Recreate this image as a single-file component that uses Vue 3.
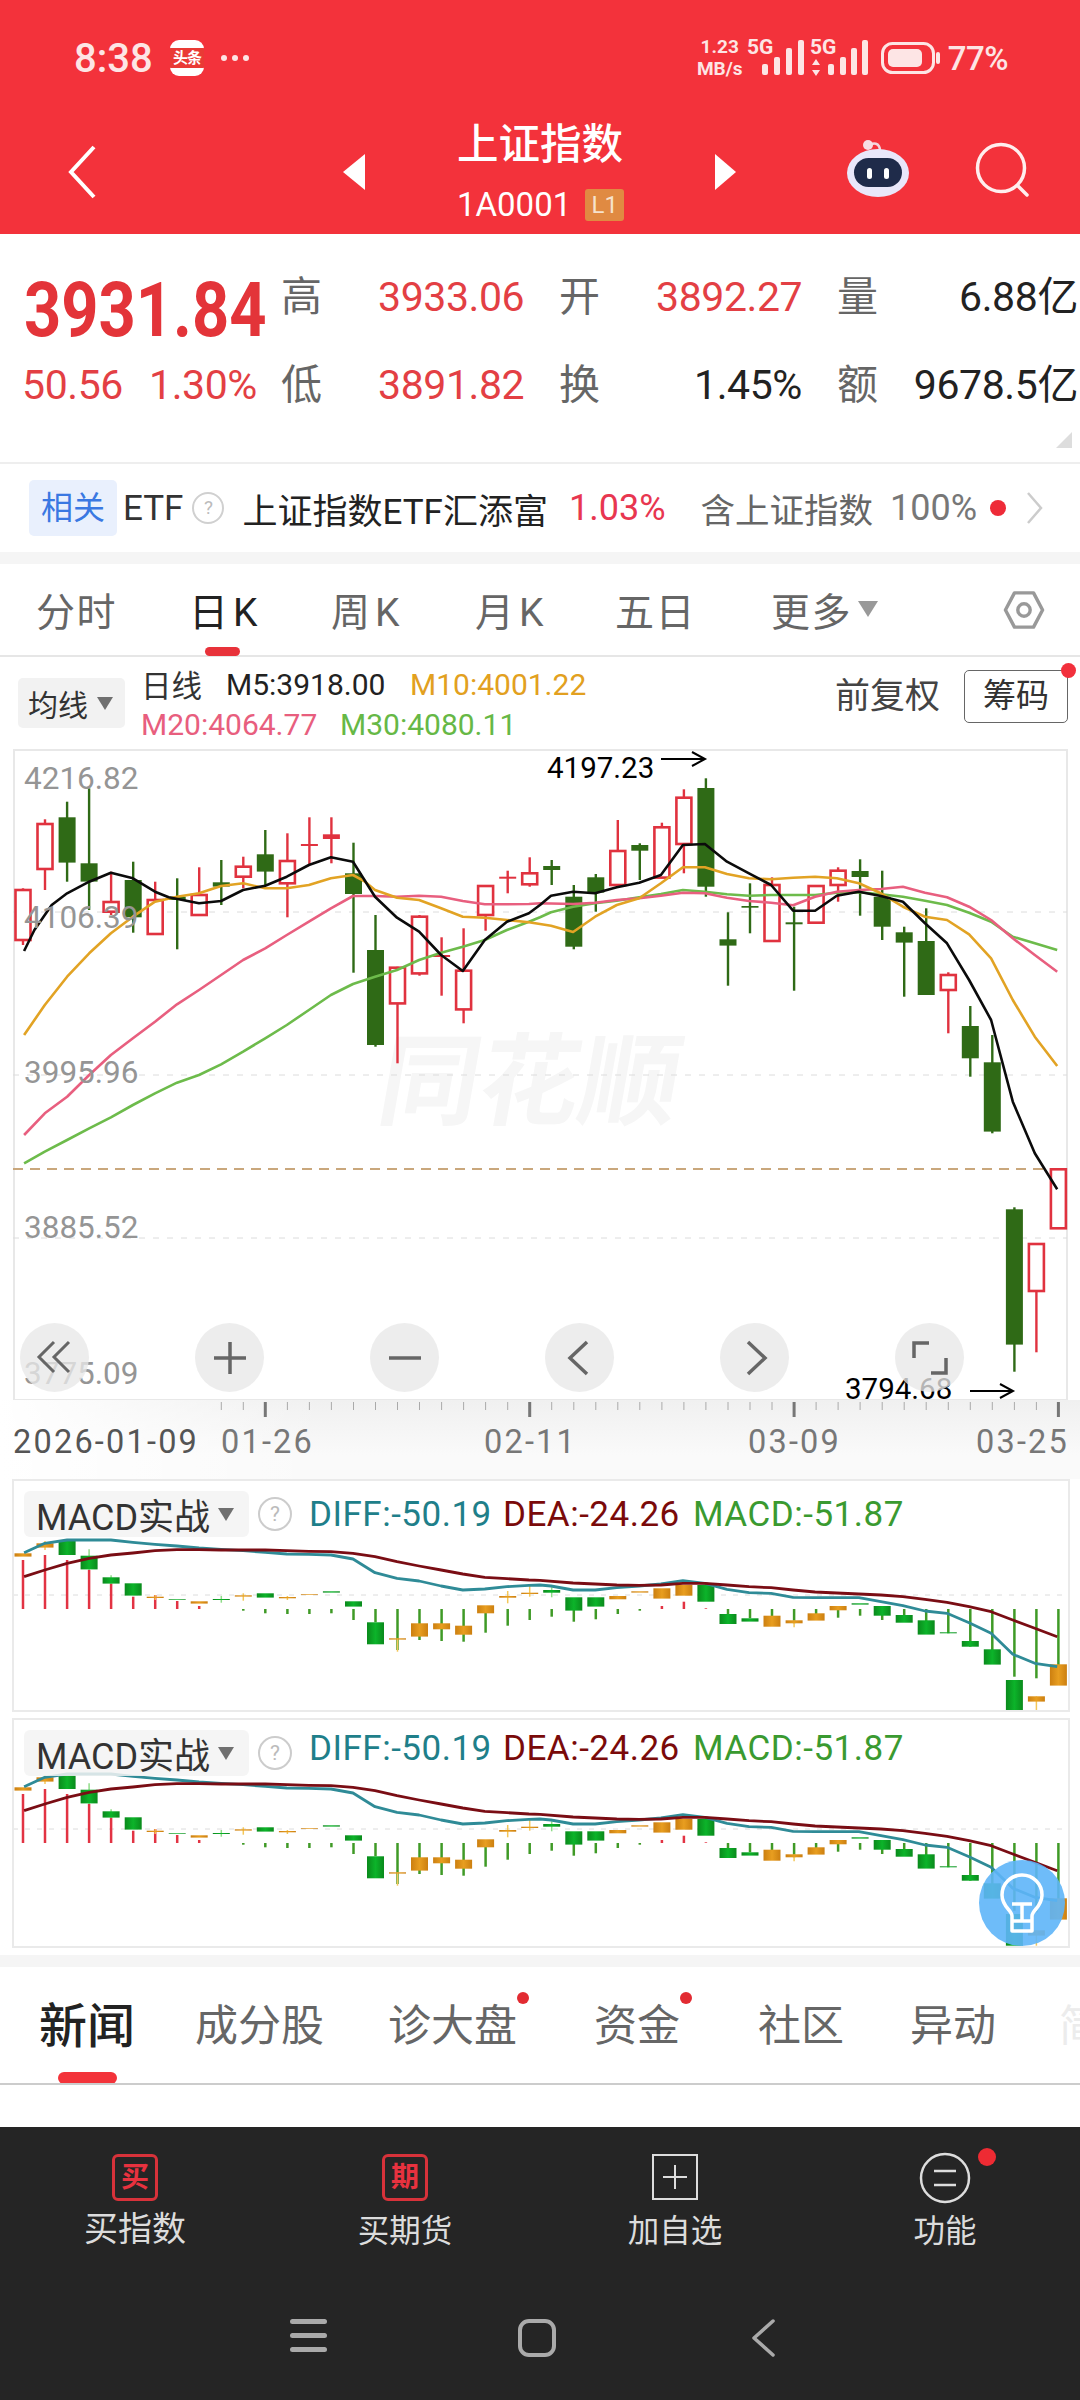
<script setup>
const X = i => 23 + 22.03 * i
const Y = d => +(750 + d / 3).toFixed(1)
const pairs = (a, ox) => {
  const out = []
  for (let i = 0; i < a.length; i += 2) out.push(`${(ox + a[i] / 2.904).toFixed(1)},${Y(a[i + 1])}`)
  return out
}
const line = (a, b) => [...pairs(a, 0), ...pairs(b, 540)].join(' ')

const kRaw = [
  ['R',415,420,570,585],['R',208,222,357,420],['G',155,202,338,395],['G',115,340,395,480],
  ['R',365,456,485,495],['G',335,390,502,548],['R',395,450,552,552],['G',385,440,450,598],
  ['R',352,435,495,495],['G',330,397,410,465],['R',320,350,380,415],['G',240,313,365,405],
  ['R',250,333,400,502],['R',202,282,288,342],['R',202,253,267,340],['G',278,370,432,668],
  ['G',495,600,885,890],['R',650,653,760,940],['R',495,500,670,677],['R',562,615,621,737],
  ['R',535,662,778,820],['R',408,408,495,542],['R',362,380,386,430],['R',322,370,403,410],
  ['G',330,348,360,405],['G',405,440,590,598],['G',372,382,428,485],['R',210,303,405,405],
  ['G',280,285,302,390],['R',218,232,383,385],['R',118,143,282,370],['G',85,114,410,440],
  ['G',487,568,587,707],['G',400,468,473,550],['R',382,405,573,573],['G',470,517,523,722],
  ['R',408,408,518,518],['R',352,362,405,455],['G',328,363,381,497],['G',362,440,530,570],
  ['G',530,547,578,740],['G',475,573,735,735],['R',667,675,720,850],['G',768,828,925,980],
  ['G',855,937,1145,1150],['G',1372,1378,1784,1865],['R',1482,1482,1623,1807],['R',1255,1258,1435,1435]
]
const candles = kRaw.map((k, i) => {
  const x = +X(i).toFixed(1)
  const thin = k[3] - k[2] < 24
  return {
    i, x, red: k[0] === 'R', thin,
    wy1: Y(k[1]), wy2: Y(k[4]),
    by: Y(k[2]), bh: +Math.max((k[3] - k[2]) / 3, 1.5).toFixed(1)
  }
})

const m5 = line(
  [70,603,100,540,150,465,195,430,259,395,322,368,386,385,450,425,490,442,578,460,642,453,706,420,770,407,833,380,897,345,961,322,1025,335,1089,440,1153,503,1217,545,1281,615,1344,663,1408,570,1472,515,1536,490],
  [0,465,32,437,96,425,160,430,223,412,288,398,351,375,415,285,479,282,543,335,607,370,671,405,735,482,799,482,862,437,926,425,990,438,1054,455,1118,520,1182,580,1246,690,1310,810,1373,1055,1437,1210,1502,1318]
)
const m10 = line(
  [70,855,130,765,195,680,259,610,322,550,386,500,450,455,514,440,578,430,642,408,706,400,770,415,833,415,897,405,961,385,1025,375,1060,395,1089,420,1153,443,1217,450,1281,475,1344,500,1408,503,1472,510,1536,517],
  [0,522,32,527,96,546,160,500,223,465,288,445,351,400,415,352,479,352,543,372,607,385,671,388,735,383,799,380,862,385,926,400,990,430,1054,470,1118,500,1182,510,1246,553,1310,625,1373,750,1437,860,1502,948]
)
const m20 = line(
  [70,1155,130,1090,195,1040,259,975,322,915,386,865,450,815,514,763,578,720,642,675,706,630,770,595,833,555,897,515,961,475,1025,438,1089,438,1153,440,1217,437,1281,440,1344,453,1408,463,1472,463,1536,462],
  [0,460,96,462,160,458,223,450,288,445,351,437,415,428,479,430,543,443,607,453,671,458,735,466,799,440,862,425,926,420,990,417,1054,410,1118,428,1182,442,1246,470,1310,510,1373,565,1437,615,1502,665]
)
const m30 = line(
  [70,1240,130,1205,195,1170,259,1135,322,1102,386,1065,450,1030,514,998,578,975,642,943,706,905,770,865,833,825,897,780,961,735,1025,702,1089,680,1153,660,1217,630,1281,608,1344,590,1408,570,1472,540,1536,515],
  [0,502,32,487,96,470,160,460,223,452,288,442,351,432,415,420,479,425,543,433,607,437,671,435,735,435,799,435,862,428,926,427,990,433,1054,440,1118,452,1182,465,1246,488,1310,515,1373,560,1437,580,1502,600]
)

const ticks = Array.from({ length: 39 }, (_, k) => {
  const i = k + 9
  return { x: +X(i).toFixed(1), major: [11, 23, 35, 47].includes(i) }
})

// MACD pane data, in zoom units
const diffA = [70,278,130,250,195,240,259,240,322,240,386,247,450,253,514,258,578,264,642,268,706,272,770,277,833,282,897,283,961,285,1025,297,1089,338,1153,355,1217,363,1281,378,1344,390,1408,387,1472,380,1536,376]
const diffB = [0,375,32,378,96,390,160,390,223,383,288,378,351,372,415,362,479,370,543,388,607,398,671,400,735,412,799,413,862,413,926,413,990,425,1054,437,1118,453,1182,460,1246,488,1310,520,1373,583,1437,610,1502,620]
const deaA = [70,350,130,330,195,310,259,295,322,285,386,279,450,272,514,269,578,269,642,270,706,270,770,270,833,272,897,274,961,275,1025,280,1089,290,1153,305,1217,318,1281,330,1344,342,1408,352,1472,356,1536,360]
const deaB = [0,361,96,369,160,372,223,375,288,376,351,375,415,370,479,370,543,375,607,380,671,383,735,390,799,396,862,399,926,402,990,405,1054,410,1118,418,1182,427,1246,440,1310,455,1373,480,1437,505,1502,530]

const stickRaw = [300,285,300,330,370,410,405,423,438,0,-452,-460,-462,-462,-460,-480,-487,-570,-540,-543,-545,-518,-497,-480,-470,-485,-478,-462,-452,438,425,445,-470,-475,-490,-490,-470,-473,-467,-480,-468,-483,-520,-560,-575,-650,-655,-625]
const boxRaw = [
  ['O',280,290],['O',250,263,243,270],['G',240,285],['G',287,328,268,330],['G',352,371,346,372],['G',370,407],
  ['O',410,414,405,420],['G',417,419],['O',424,431],['G',417,420,408,428],['O',406,410,400,422],['G',400,413],
  ['O',411,415,408,420],['O',403,405],['G',394,398],['G',424,440],['G',487,553],['O',535,539,535,575],
  ['O',490,530],['O',490,508],['O',497,524],['O',436,460],['O',408,413,393,430],['O',398,402,375,410],
  ['G',390,398,382,412],['G',412,452],['G',412,440],['O',408,418],['O',394,398],['O',385,416],['O',375,407],
  ['G',375,425],['G',462,492],['G',475,485],['O',467,500],['O',481,490,481,502],['O',460,482],['O',438,451],
  ['G',430,434],['G',438,467],['G',465,488],['G',481,524],['G',517,520],['G',543,560],['G',568,614],
  ['G',660,755],['O',709,725,709,755],['O',613,677]
]
const buildPane = (n, top, height, off) => {
  const y = d => +(1460 + (d + off) / 3).toFixed(1)
  const toPts = (a, ox) => {
    const r = []
    for (let i = 0; i < a.length; i += 2) r.push(`${(ox + a[i] / 2.904).toFixed(1)},${y(a[i + 1])}`)
    return r
  }
  return {
    n, top, height,
    view: `0 ${top} 1080 ${height}`,
    zero: y(405),
    diff: [...toPts(diffA, 0), ...toPts(diffB, 540)].join(' '),
    dea: [...toPts(deaA, 0), ...toPts(deaB, 540)].join(' '),
    sticks: stickRaw.map((s, i) => ({
      i, x: +X(i).toFixed(1), red: s > 0,
      y1: s > 0 ? y(s) : y(447), y2: s > 0 ? y(447) : y(-s), skip: s === 0
    })).filter(s => !s.skip),
    boxes: boxRaw.map((b, i) => ({
      i, x: +X(i).toFixed(1), orange: b[0] === 'O',
      y: y(b[1]), h: +((b[2] - b[1]) / 3).toFixed(1),
      w1: b[3] !== undefined ? y(b[3]) : null, w2: b[4] !== undefined ? y(b[4]) : null
    }))
  }
}
const panes = [buildPane('a', 1479, 233, 0), buildPane('b', 1718, 230, 702)]

const timeTabs = [{ t: '分时' }, { t: '日K', k: true, act: true }, { t: '周K', k: true }, { t: '月K', k: true }, { t: '五日' }]
const newsTabs = [
  { t: '新闻', on: true }, { t: '成分股' }, { t: '诊大盘', dot: true }, { t: '资金', dot: true },
  { t: '社区' }, { t: '异动' }, { t: '简', fade: true }
]
</script>

<template>
  <div class="page">
    <header class="hdr">
      <div class="status">
        <span class="time">8:38</span>
        <span class="tt"><span class="tt-band">头条</span></span>
        <svg class="more" width="30" height="8" viewBox="0 0 30 8"><circle cx="4" cy="4" r="3" fill="#fde5e5"/><circle cx="15" cy="4" r="3" fill="#fde5e5"/><circle cx="26" cy="4" r="3" fill="#fde5e5"/></svg>
        <div class="sr">
          <div class="net"><span>1.23</span><span>MB/s</span></div>
          <svg class="sig" width="60" height="50" viewBox="0 -12 60 50">
            <text x="0" y="15" class="fiveg">5G</text>
            <rect x="15" y="25" width="6" height="11" rx="2"/><rect x="27" y="18" width="6" height="18" rx="2"/><rect x="39" y="9" width="6" height="27" rx="2"/><rect x="51" y="1" width="6" height="35" rx="2"/>
          </svg>
          <svg class="sig" width="62" height="50" viewBox="0 -12 62 50">
            <text x="0" y="15" class="fiveg">5G</text>
            <path d="M6 20l4 6H2zM6 37l4-6H2z"/>
            <rect x="18" y="25" width="6" height="11" rx="2"/><rect x="30" y="18" width="6" height="18" rx="2"/><rect x="41" y="9" width="6" height="27" rx="2"/><rect x="52" y="1" width="6" height="35" rx="2"/>
          </svg>
          <svg class="batt" width="60" height="32" viewBox="0 0 60 32">
            <rect x="1.5" y="1.5" width="51" height="29" rx="10" fill="none" stroke="#fde5e5" stroke-width="3"/>
            <rect x="7" y="7" width="34" height="18" rx="5" fill="#fde5e5"/>
            <rect x="55" y="10" width="4" height="12" rx="2" fill="#fde5e5"/>
          </svg>
          <span class="pct">77%</span>
        </div>
      </div>
      <div class="nav">
        <svg class="back" width="32" height="56" viewBox="0 0 32 56"><path d="M28 3 5 28l23 25" fill="none" stroke="#fff" stroke-width="4"/></svg>
        <span class="tri-l"></span>
        <div class="title">
          <div class="title-t">上证指数</div>
          <div class="title-c">1A0001<span class="l1">L1</span></div>
        </div>
        <span class="tri-r"></span>
        <svg class="robot" width="64" height="60" viewBox="0 0 64 60">
          <path d="M22 9c5-6 12-4 12 4" fill="none" stroke="#f3d5dc" stroke-width="2.5"/>
          <circle cx="22" cy="7" r="5" fill="#f7dde3"/>
          <ellipse cx="32" cy="35" rx="31" ry="24" fill="#e9e7fa"/>
          <rect x="8" y="20" width="48" height="29" rx="14.5" fill="#1f2b4a"/>
          <rect x="21" y="30" width="5" height="11" rx="2.5" fill="#fff"/>
          <rect x="38" y="30" width="5" height="11" rx="2.5" fill="#fff"/>
        </svg>
        <svg class="search" width="58" height="58" viewBox="0 0 58 58">
          <circle cx="26" cy="26" r="23.5" fill="none" stroke="#ffeeee" stroke-width="3.5"/>
          <path d="M43 44l9 9" stroke="#ffeeee" stroke-width="3.5" stroke-linecap="round"/>
        </svg>
      </div>
    </header>

    <section class="quote">
      <div class="price"><span>3931.84</span></div>
      <span class="lab">高</span><span class="val red">3933.06</span>
      <span class="lab">开</span><span class="val red rt">3892.27</span>
      <div class="lastcell"><span class="lab">量</span><span class="val dark">6.88亿</span></div>
      <div class="change"><span>50.56</span><span>1.30%</span></div>
      <span class="lab">低</span><span class="val red">3891.82</span>
      <span class="lab">换</span><span class="val dark rt">1.45%</span>
      <div class="lastcell"><span class="lab">额</span><span class="val dark">9678.5亿</span></div>
      <span class="corner"></span>
    </section>

    <section class="etf">
      <span class="chip-rel">相关</span>
      <span class="etf-l">ETF</span>
      <span class="help-s">?</span>
      <span class="etf-name">上证指数ETF汇添富</span>
      <span class="etf-pct">1.03%</span>
      <span class="etf-inc">含上证指数</span>
      <span class="etf-100">100%</span>
      <span class="etf-dot"></span>
      <svg class="etf-chev" width="18" height="32" viewBox="0 0 18 32"><path d="M2 1l13 15L2 31" fill="none" stroke="#ccc" stroke-width="2.5"/></svg>
    </section>
    <div class="band"></div>

    <nav class="tabs">
      <span v-for="t in timeTabs" :key="t.t" class="tab" :class="{ act: t.act, tabk: t.k }">{{ t.t }}</span>
      <span class="tab tab-more">更多<i class="tr tr-g"></i></span>
      <svg class="gear" width="42" height="40" viewBox="0 0 44 42">
        <path d="M12 3h20L41.500 21 32 39H12L2.500 21z" fill="none" stroke="#999" stroke-width="3.600" stroke-linejoin="round"/>
        <circle cx="22" cy="21" r="6.500" fill="none" stroke="#999" stroke-width="3.600"/>
      </svg>
    </nav>

    <section class="khead">
      <span class="chip-ma">均线<i class="tr tr-d"></i></span>
      <div class="legend">
        <div class="lg-row"><span class="lg-day">日线</span><span class="lg-m5">M5:3918.00</span><span class="lg-m10">M10:4001.22</span></div>
        <div class="lg-row"><span class="lg-m20">M20:4064.77</span><span class="lg-m30">M30:4080.11</span></div>
      </div>
      <span class="fq">前复权</span>
      <span class="chou">筹码<i class="chou-dot"></i></span>
    </section>

    <section class="kchart">
      <span class="mark">同花顺</span>
      <svg class="fill" viewBox="0 749 1080 662" width="1080" height="662">
        <path d="M14 1400V750H1067V1400" fill="none" stroke="#e8e8e8" stroke-width="2"/>
        <path d="M14 1400H1067" stroke="#e8e8e8" stroke-width="2"/>
        <g stroke="#dcdcdc" stroke-width="1" stroke-dasharray="6 8">
          <path d="M13 912H1067M13 1075H1067M13 1238H1067"/>
        </g>
        <path d="M13 1169H1067" stroke="#c9a77c" stroke-width="2" stroke-dasharray="10 7"/>
        <g v-for="c in candles" :key="c.i">
          <line :x1="c.x" :x2="c.x" :y1="c.wy1" :y2="c.wy2" :stroke="c.red ? '#e0323f' : '#2f6a16'" stroke-width="2.4"/>
          <rect v-if="!c.red" :x="c.x - 8.500" :y="c.by" width="17" :height="c.bh" fill="#2f6a16"/>
          <rect v-else-if="c.thin" :x="c.x - 8.500" :y="c.by" width="17" :height="c.bh" fill="#e0323f"/>
          <rect v-else :x="c.x - 7.500" :y="c.by" width="15" :height="c.bh" fill="#fff" stroke="#e0323f" stroke-width="2.600"/>
        </g>
        <g fill="none" stroke-linejoin="round" stroke-width="2.600">
          <polyline :points="m30" stroke="#6dbb4b"/>
          <polyline :points="m20" stroke="#e85f7f"/>
          <polyline :points="m10" stroke="#e2a324"/>
          <polyline :points="m5" stroke="#0b0b0b"/>
        </g>
        <g class="axis">
          <text x="24" y="789">4216.82</text>
          <text x="24" y="928">4106.39</text>
          <text x="24" y="1083">3995.96</text>
          <text x="24" y="1238">3885.52</text>
          <text x="24" y="1384">3775.09</text>
        </g>
        <text x="547" y="778" class="ext">4197.23</text>
        <path d="M661 759H704M692 752l13 7-13 7" fill="none" stroke="#000" stroke-width="2"/>
        <text x="845" y="1399" class="ext">3794.68</text>
        <path d="M970 1391H1012M1000 1384l13 7-13 7" fill="none" stroke="#000" stroke-width="2"/>
      </svg>
      <div class="zoombar">
        <span class="zb"><svg width="40" height="40" viewBox="0 0 40 40"><path d="M19 4 4 19l15 15M34 4 19 19l15 15" fill="none" stroke="#666" stroke-width="3"/></svg></span>
        <span class="zb"><svg width="40" height="40" viewBox="0 0 40 40"><path d="M20 4v32M4 20h32" stroke="#666" stroke-width="3.500"/></svg></span>
        <span class="zb"><svg width="40" height="40" viewBox="0 0 40 40"><path d="M4 20h32" stroke="#666" stroke-width="3.500"/></svg></span>
        <span class="zb"><svg width="40" height="40" viewBox="0 0 40 40"><path d="M27 4 10 20l17 16" fill="none" stroke="#666" stroke-width="3.500"/></svg></span>
        <span class="zb"><svg width="40" height="40" viewBox="0 0 40 40"><path d="M13 4l17 16-17 16" fill="none" stroke="#666" stroke-width="3.500"/></svg></span>
        <span class="zb"><svg width="40" height="40" viewBox="0 0 40 40"><path d="M4 20V5h15M36 20v15H21" fill="none" stroke="#666" stroke-width="3.500"/></svg></span>
      </div>
    </section>

    <section class="dates">
      <svg class="tickbar" width="1080" height="20" viewBox="0 0 1080 20">
        <line v-for="t in ticks" :key="t.x" :x1="t.x" :x2="t.x" y1="2" :y2="t.major ? 17 : 10" :stroke="t.major ? '#777' : '#aaa'" :stroke-width="t.major ? 3 : 1"/>
      </svg>
      <div class="dgrid">
        <span class="d0">2026-01-09</span><span>01-26</span><span>02-11</span><span>03-09</span><span>03-25</span>
      </div>
    </section>

    <section v-for="p in panes" :key="p.n" class="pane" :class="'pane-' + p.n">
      <svg class="fill" :viewBox="p.view" width="1080" :height="p.height">
        <defs>
          <linearGradient :id="'mg' + p.n"><stop offset="0" stop-color="#0a8a1c"/><stop offset=".5" stop-color="#0cb42a"/><stop offset="1" stop-color="#0a8a1c"/></linearGradient>
          <linearGradient :id="'mo' + p.n"><stop offset="0" stop-color="#cc7f10"/><stop offset=".5" stop-color="#e89e20"/><stop offset="1" stop-color="#cc7f10"/></linearGradient>
        </defs>
        <path :d="`M13 ${p.zero}H1067`" stroke="#dcdcdc" stroke-width="1" stroke-dasharray="5 7"/>
        <g v-for="s in p.sticks" :key="'s' + s.i">
          <line :x1="s.x" :x2="s.x" :y1="s.y1" :y2="s.y2" :stroke="s.red ? '#e23343' : '#3f9a26'" stroke-width="2.500"/>
        </g>
        <g v-for="b in p.boxes" :key="'b' + b.i">
          <line v-if="b.w1 !== null" :x1="b.x" :x2="b.x" :y1="b.w1" :y2="b.w2" :stroke="b.orange ? '#f3c75a' : '#8fdc88'" stroke-width="1.500"/>
          <rect :x="b.x - 8.500" :y="b.y" width="17" :height="b.h" :fill="b.orange ? `url(#mo${p.n})` : `url(#mg${p.n})`"/>
        </g>
        <polyline :points="p.diff" fill="none" stroke="#2f8b97" stroke-width="2.800" stroke-linejoin="round"/>
        <polyline :points="p.dea" fill="none" stroke="#7a0d14" stroke-width="2.800" stroke-linejoin="round"/>
      </svg>
      <div class="mhead">
        <span class="chip-m">MACD实战<i class="tr tr-d"></i></span>
        <span class="help-m">?</span>
        <div class="mleg">
          <span class="diff">DIFF:-50.19</span><span class="dea">DEA:-24.26</span><span class="macd">MACD:-51.87</span>
        </div>
      </div>
      <div v-if="p.n === 'b'" class="bulb">
        <svg width="86" height="86" viewBox="0 0 86 86">
          <path d="M33 56C33 50 23 47 23 35a20 20 0 1 1 40 0C63 47 53 50 53 56V71H33Z" fill="none" stroke="#fff" stroke-width="3.500" stroke-linejoin="round"/>
          <path d="M33 44H53M43 44V60M33 61H53" fill="none" stroke="#fff" stroke-width="3.500"/>
        </svg>
      </div>
    </section>
    <div class="after"></div>
    <div class="band"></div>

    <nav class="news">
      <span v-for="t in newsTabs" :key="t.t" class="nt" :class="{ on: t.on, fade: t.fade }">{{ t.t }}<i v-if="t.dot" class="nt-dot"></i></span>
      <i class="nt-bar"></i>
    </nav>
    <div class="newsbody"></div>

    <footer class="foot">
      <div class="acts">
        <div class="act-i"><span class="ibox">买</span><span class="al al-big">买指数</span></div>
        <div class="act-i"><span class="ibox">期</span><span class="al">买期货</span></div>
        <div class="act-i">
          <svg width="48" height="48" viewBox="0 0 48 48"><rect x="2" y="2" width="44" height="44" fill="none" stroke="#ddd" stroke-width="2"/><path d="M24 12v24M12 24h24" stroke="#ddd" stroke-width="2"/></svg>
          <span class="al">加自选</span>
        </div>
        <div class="act-i act-fn">
          <svg width="52" height="52" viewBox="0 0 52 52"><circle cx="26" cy="26" r="24" fill="none" stroke="#ddd" stroke-width="2.500"/><path d="M15 19h22M15 33h22" stroke="#ddd" stroke-width="2.500"/></svg>
          <span class="al">功能</span>
          <i class="fn-dot"></i>
        </div>
      </div>
      <div class="keys">
        <svg width="37" height="38" viewBox="0 0 37 38"><rect y="0" width="37" height="5" rx="2.500" fill="#aaa"/><rect y="14" width="37" height="5" rx="2.500" fill="#aaa"/><rect y="28" width="37" height="5" rx="2.500" fill="#aaa"/></svg>
        <svg width="38" height="38" viewBox="0 0 38 38"><rect x="2" y="2" width="34" height="34" rx="9" fill="none" stroke="#aaa" stroke-width="4"/></svg>
        <svg width="26" height="38" viewBox="0 0 26 38"><path d="M23 2 4 19l19 17" fill="none" stroke="#aaa" stroke-width="3.500" stroke-linecap="round" stroke-linejoin="round"/></svg>
      </div>
    </footer>
  </div>
</template>

<style>
html, body { margin: 0; background: #fff; }
</style>

<style scoped>
.page {
  width: 1080px; height: 2400px; overflow: hidden; display: flex; flex-direction: column; background: #fff;
  font-family: Roboto, "Noto Sans CJK SC", "Liberation Sans", sans-serif; color: #333;
}
i { font-style: normal; }

.hdr { height: 234px; background: #f3323b; flex: none; color: #fff; }
.status { height: 116px; display: flex; align-items: center; padding-left: 74px; box-sizing: border-box; }
.time { font-size: 40px; font-weight: 500; color: #fde5e5; width: 96px; }
.tt { width: 34px; height: 36px; background: #fff; border-radius: 9px; display: flex; align-items: center; overflow: hidden; }
.tt-band { flex: 1; height: 20px; background: #ea3a35; color: #fff; font-size: 15px; font-weight: 700; line-height: 20px; text-align: center; letter-spacing: -1px; white-space: nowrap; }
.more { margin-left: 16px; }
.sr { margin-left: auto; padding-right: 72px; display: flex; align-items: center; color: #fde5e5; }
.net { width: 50px; display: flex; flex-direction: column; align-items: center; font-size: 19px; font-weight: 700; line-height: 22px; margin-right: 2px; }
.sig { fill: #fde5e5; margin-top: -12px; }
.sig + .sig { margin-left: 3px; }
.fiveg { font: 700 21px Roboto, sans-serif; fill: #fde5e5; }
.batt { margin-left: 9px; }
.pct { font-size: 33px; font-weight: 500; margin-left: 7px; letter-spacing: -.5px; }

.nav { height: 118px; display: flex; align-items: center; position: relative; }
.back { margin-left: 66px; margin-top: -6px; margin-right: 245px; }
.tri-l { width: 0; height: 0; border: solid transparent; border-width: 18px 22px 18px 0; border-right-color: #fff; margin-top: -6px; }
.title { margin-left: 92px; width: 168px; display: flex; flex-direction: column; align-items: flex-start; margin-top: -6px; }
.title-t { font-size: 41.500px; line-height: 52px; font-weight: 500; height: 52px; margin-top: -1px; white-space: nowrap; }
.title-c { font-size: 33px; line-height: 38px; margin-top: 15px; display: flex; align-items: center; white-space: nowrap; }
.l1 { width: 39px; height: 32px; line-height: 32px; text-align: center; background: #e08a42; border-radius: 3px; font-size: 24px; margin-left: 14px; color: #f6e2cc; }
.tri-r { width: 0; height: 0; border: solid transparent; border-width: 18px 0 18px 21px; border-left-color: #fff; margin-left: 90px; margin-top: -6px; }
.robot { margin-left: 110px; margin-top: -14px; }
.search { margin-left: 65px; margin-top: -8px; }

.quote {
  height: 230px; flex: none; box-sizing: border-box; border-bottom: 2px solid #eee; position: relative;
  display: grid; grid-template-columns: 282px 96px 182px 96px 182px 242px; grid-template-rows: 88px 88px;
  padding-top: 19px; align-items: center;
}
.price { align-self: end; line-height: 62px; height: 62px; padding-left: 24px; color: #e33439; white-space: nowrap; }
.price span { display: inline-block; font-size: 76px; font-weight: 700; transform: scaleX(.855); transform-origin: left center; }
.change { display: flex; gap: 26px; padding-left: 22px; color: #e33f44; font-size: 41px; letter-spacing: -.4px; white-space: nowrap; }
.lab { font-size: 41px; color: #666; line-height: 50px; margin-left: -1px; }
.val { font-size: 41px; line-height: 50px; letter-spacing: -.4px; white-space: nowrap; }
.red { color: #e33f44; }
.dark { color: #222; }
.rt { text-align: right; padding-right: 36px; }
.lastcell { display: flex; justify-content: space-between; align-items: center; padding-right: 2px; }
.corner { position: absolute; right: 8px; bottom: 14px; width: 0; height: 0; border-style: solid; border-width: 0 0 16px 16px; border-color: transparent transparent #ddd transparent; }

.etf { height: 88px; flex: none; display: flex; align-items: center; padding-left: 29px; font-size: 34px; white-space: nowrap; }
.chip-rel { width: 88px; height: 56px; line-height: 56px; text-align: center; background: #e9f0fd; color: #3a78e2; font-size: 32px; border-radius: 5px; }
.etf-l { margin-left: 6px; font-size: 35px; color: #333; }
.help-s { width: 28px; height: 28px; border: 2px solid #d0d0d0; border-radius: 50%; margin-left: 9px; text-align: center; line-height: 28px; font-size: 19px; color: #bbb; }
.etf-name { margin-left: 18px; color: #222; font-size: 35px; }
.etf-pct { margin-left: 21px; color: #e83650; font-size: 36px; }
.etf-inc { margin-left: 35px; color: #666; font-size: 34.500px; }
.etf-100 { margin-left: 17px; color: #777; font-size: 36px; }
.etf-dot { width: 16px; height: 16px; border-radius: 50%; background: #ee2b38; margin-left: 13px; }
.etf-chev { margin-left: 20px; }
.band { height: 12px; flex: none; background: #f5f5f5; }

.tabs {
  height: 93px; flex: none; box-sizing: border-box; border-bottom: 2px solid #e6e6e6; position: relative; padding-left: 36px; padding-right: 35px;
  display: grid; grid-template-columns: 153px 142px 144px 140px 156px 1fr auto; align-items: center; font-size: 39px; color: #666;
}
.tab { white-space: nowrap; letter-spacing: 1.500px; margin-top: -2px; }
.tabk { letter-spacing: 5px; }
.tab.act { color: #222; }
.tab.act::after { content: ""; position: absolute; left: 205px; bottom: -1px; width: 35px; height: 9px; border-radius: 5px; background: #e8323a; }
.tab-more { display: flex; align-items: center; }
.tr { display: inline-block; width: 0; height: 0; border-style: solid; border-color: transparent; }
.tr-g { border-width: 16px 10px 0; border-top-color: #999; margin-left: 6px; }
.tr-d { border-width: 13px 8px 0; border-top-color: #707070; }
.gear { display: block; }

.khead { height: 92px; flex: none; position: relative; display: flex; align-items: flex-start; padding-left: 18px; box-sizing: border-box; }
.chip-ma { width: 107px; height: 50px; margin-top: 21px; background: #f2f2f2; border-radius: 5px; display: flex; align-items: center; padding-left: 10px; box-sizing: border-box; font-size: 30px; color: #333; gap: 9px; }
.legend { margin-left: 16px; margin-top: 7px; font-size: 30px; }
.lg-row { display: flex; height: 40px; align-items: center; white-space: nowrap; }
.lg-day { color: #333; width: 85px; font-size: 30.500px; }
.lg-m5 { color: #222; width: 184px; }
.lg-m10 { color: #e2a020; }
.lg-m20 { color: #e85e7e; width: 199px; }
.lg-m30 { color: #66b846; }
.fq { position: absolute; left: 835px; top: 16px; font-size: 35px; color: #444; line-height: 48px; }
.chou { position: absolute; left: 964px; top: 13px; width: 104px; height: 53px; box-sizing: border-box; border: 1.500px solid #666; border-radius: 5px; text-align: center; line-height: 50px; font-size: 33px; color: #333; }
.chou-dot { position: absolute; right: -9px; top: -8px; width: 15px; height: 15px; border-radius: 50%; background: #f2303c; }

.kchart { height: 651px; flex: none; position: relative; }
.fill { position: absolute; left: 0; top: 0; display: block; }
.axis { font: 400 31.500px Roboto, sans-serif; fill: #959595; }
.ext { font: 400 29.500px Roboto, sans-serif; fill: #000; }
.mark { position: absolute; left: 382px; top: 270px; font-size: 100px; line-height: 110px; font-weight: 700; color: #f6f6f6; transform: skewX(-10deg); white-space: nowrap; font-family: "Noto Sans CJK SC", sans-serif; }
.zoombar { position: absolute; left: 20px; top: 574px; display: flex; gap: 106px; z-index: 2; }
.zb { width: 69px; height: 69px; border-radius: 50%; background: rgba(232, 232, 232, .78); display: flex; align-items: center; justify-content: center; }

.dates { height: 79px; flex: none; position: relative; background: linear-gradient(to right, #fff 0, rgba(255,255,255,0) 30%), linear-gradient(#f0f0f0, #fafafa 70%); }
.tickbar { display: block; }
.dgrid { display: grid; grid-template-columns: 208px 263px 264px 228px auto; padding-left: 13px; margin-top: -1px; font-size: 32.500px; line-height: 46px; color: #777; letter-spacing: 2.200px; }
.d0 { color: #555; }

.pane { flex: none; position: relative; overflow: hidden; }
.pane-a { height: 233px; background: #fff; }
.pane-b { height: 230px; margin-top: 6px; background: #fff; }
.pane::before { content: ""; position: absolute; left: 12px; top: 0; width: 1054px; bottom: 0; border: 2px solid #eaeaea; z-index: 1; pointer-events: none; }
.mhead { position: absolute; left: 24px; top: 12px; display: flex; align-items: center; z-index: 2; }
.chip-m { width: 225px; height: 46px; background: rgba(243, 243, 243, .85); border-radius: 6px; display: flex; align-items: center; padding-left: 12px; box-sizing: border-box; font-size: 36px; color: #333; gap: 8px; white-space: nowrap; }
.help-m { width: 30px; height: 30px; border: 2.500px solid #ccc; border-radius: 50%; text-align: center; line-height: 30px; font-size: 21px; color: #bbb; margin-left: 9px; }
.mleg { margin-left: 17px; display: flex; font-size: 35px; letter-spacing: .5px; white-space: nowrap; }
.pane-b .mleg { margin-top: -10px; }
.diff { color: #1f7f8a; width: 194px; }
.dea { color: #7a0a0a; width: 190px; }
.macd { color: #3a9a30; }
.bulb { position: absolute; left: 979px; top: 142px; width: 86px; height: 86px; border-radius: 50%; background: rgba(94, 181, 248, .9); z-index: 3; }
.after { height: 7px; flex: none; }

.news { height: 118px; flex: none; box-sizing: border-box; border-bottom: 2px solid #ccc; position: relative; padding-left: 39px; overflow: hidden; display: grid; grid-template-columns: 156px 193px 206px 164px 152px 149px 40px; align-items: center; font-size: 43px; color: #666; }
.nt { position: relative; white-space: nowrap; justify-self: start; margin-top: -6px; }
.nt.on { font-size: 48px; font-weight: 500; color: #222; }
.nt.fade { color: #ececec; }
.nt-dot { position: absolute; right: -12px; top: 1px; width: 12px; height: 12px; border-radius: 50%; background: #e22b32; }
.nt-bar { position: absolute; left: 58px; bottom: -1px; width: 59px; height: 12px; border-radius: 6px; background: #f3333a; }
.newsbody { height: 42px; flex: none; }

.foot { flex: 1; background: #252525; display: flex; flex-direction: column; }
.acts { height: 143px; flex: none; display: grid; grid-template-columns: repeat(4, 270px); padding-top: 26px; box-sizing: border-box; }
.act-i { display: flex; flex-direction: column; align-items: center; position: relative; height: 112px; }
.ibox { width: 46px; height: 47px; box-sizing: border-box; border: 3px solid #d8323a; border-radius: 6px; color: #e8323f; font-size: 28px; font-weight: 700; line-height: 41px; text-align: center; flex: none; margin: 1px 0; }
.al { position: absolute; top: 59px; color: #dcdcdc; font-size: 31.500px; line-height: 40px; white-space: nowrap; }
.al-big { font-size: 34px; top: 56px; }
.act-fn svg { margin-top: -1px; }
.fn-dot { position: absolute; left: 168px; top: -5px; width: 18px; height: 18px; border-radius: 50%; background: #ee2b33; }
.keys { flex: 1; display: flex; align-items: flex-start; padding-left: 290px; padding-top: 49px; gap: 191px; }
.keys svg:last-child { margin-left: 3px; }
</style>
